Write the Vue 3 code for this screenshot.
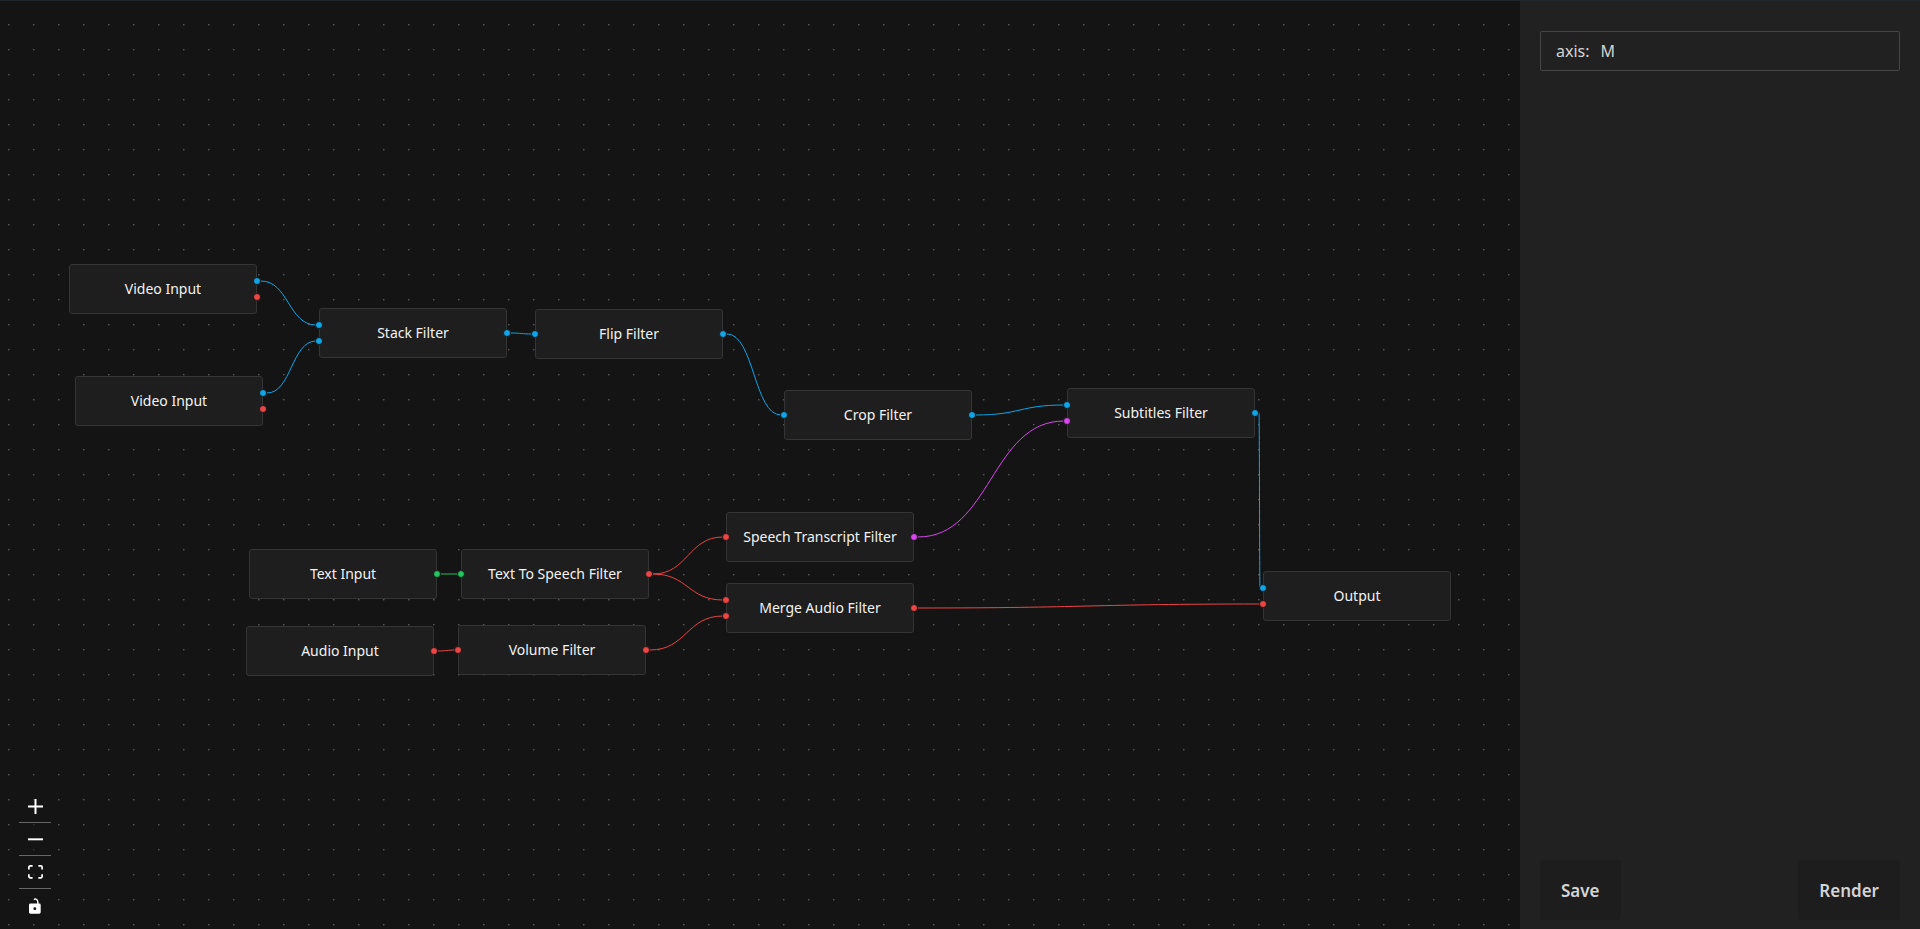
<script setup>
import { ref } from 'vue'

const WIDTH = 188

const nodes = [
  { id: 'video1', title: 'Video Input', x: 69, y: 264, out: ['video', 'audio'] },
  { id: 'video2', title: 'Video Input', x: 75, y: 376, out: ['video', 'audio'] },
  { id: 'stack', title: 'Stack Filter', x: 319, y: 308, in: ['video', 'video'], out: ['video'] },
  { id: 'flip', title: 'Flip Filter', x: 535, y: 309, in: ['video'], out: ['video'] },
  { id: 'crop', title: 'Crop Filter', x: 784, y: 390, in: ['video'], out: ['video'] },
  { id: 'subs', title: 'Subtitles Filter', x: 1067, y: 388, in: ['video', 'subtitle'], out: ['video'] },
  { id: 'text', title: 'Text Input', x: 249, y: 549, out: ['text'] },
  { id: 'tts', title: 'Text To Speech Filter', x: 461, y: 549, in: ['text'], out: ['audio'] },
  { id: 'audio', title: 'Audio Input', x: 246, y: 626, out: ['audio'] },
  { id: 'volume', title: 'Volume Filter', x: 458, y: 625, in: ['audio'], out: ['audio'] },
  { id: 'speech', title: 'Speech Transcript Filter', x: 726, y: 512, in: ['audio'], out: ['subtitle'] },
  { id: 'merge', title: 'Merge Audio Filter', x: 726, y: 583, in: ['audio', 'audio'], out: ['audio'] },
  { id: 'output', title: 'Output', x: 1263, y: 571, in: ['video', 'audio'] },
]

const links = [
  ['video1', 0, 'stack', 0],
  ['video2', 0, 'stack', 1],
  ['stack', 0, 'flip', 0],
  ['flip', 0, 'crop', 0],
  ['crop', 0, 'subs', 0],
  ['speech', 0, 'subs', 1],
  ['subs', 0, 'output', 0],
  ['text', 0, 'tts', 0],
  ['audio', 0, 'volume', 0],
  ['tts', 0, 'speech', 0],
  ['tts', 0, 'merge', 0],
  ['volume', 0, 'merge', 1],
  ['merge', 0, 'output', 1],
]

const byId = Object.fromEntries(nodes.map((n) => [n.id, n]))
const portY = (count, i) => (count === 1 ? 25 : i === 0 ? 17 : 33)

const edges = links.map(([from, i, to, j]) => {
  const a = byId[from]
  const b = byId[to]
  const x1 = a.x + WIDTH + 4
  const y1 = a.y + portY(a.out.length, i)
  const x2 = b.x - 3
  const y2 = b.y + portY(b.in.length, j)
  const mid = (x1 + x2) / 2
  return { kind: a.out[i], d: `M${x1} ${y1} C${mid} ${y1} ${mid} ${y2} ${x2} ${y2}` }
})

const axis = ref('M')
</script>

<template>
  <div class="app">
    <main class="canvas">
      <svg class="layer" aria-hidden="true">
        <defs>
          <pattern id="dots" x="8" y="24" width="25" height="25" patternUnits="userSpaceOnUse">
            <circle cx="0.8" cy="0.8" r="0.8" fill="#666" />
          </pattern>
        </defs>
        <rect width="100%" height="100%" fill="url(#dots)" />
        <path v-for="e in edges" :key="e.d" :d="e.d" class="edge" :class="e.kind" />
      </svg>

      <div v-for="n in nodes" :key="n.id" class="node" :style="{ left: n.x + 'px', top: n.y + 'px' }">
        <div v-if="n.in" class="ports left">
          <span v-for="(p, i) in n.in" :key="i" class="port" :class="p"></span>
        </div>
        {{ n.title }}
        <div v-if="n.out" class="ports right">
          <span v-for="(p, i) in n.out" :key="i" class="port" :class="p"></span>
        </div>
      </div>

      <div class="controls">
        <button type="button" aria-label="Zoom in">
          <svg width="15" height="15" viewBox="0 0 32 32"><path d="M32 18.133H18.133V32h-4.266V18.133H0v-4.266h13.867V0h4.266v13.867H32z" /></svg>
        </button>
        <button type="button" aria-label="Zoom out">
          <svg width="15" height="3" viewBox="0 0 32 5"><path d="M0 0h32v4.2H0z" /></svg>
        </button>
        <button type="button" aria-label="Fit view">
          <svg width="15" height="14" viewBox="0 0 32 30"><path d="M3.692 4.63c0-.53.4-.938.939-.938h5.215V0H4.708C2.13 0 0 2.054 0 4.63v5.216h3.692V4.631zM27.354 0h-5.2v3.692h5.17c.53 0 .984.4.984.939v5.215H32V4.631A4.624 4.624 0 0027.354 0zm.954 24.83c0 .532-.4.94-.939.94h-5.215v3.768h5.215c2.577 0 4.631-2.13 4.631-4.707v-5.139h-3.692v5.139zm-23.677.94c-.531 0-.939-.4-.939-.94v-5.138H0v5.139c0 2.577 2.13 4.707 4.708 4.707h5.138V25.77H4.631z" /></svg>
        </button>
        <button type="button" aria-label="Toggle interactivity">
          <svg width="12" height="16" viewBox="0 0 25 32"><path d="M21.333 10.667H19.81V7.619C19.81 3.429 16.38 0 12.19 0c-4.114 1.828-1.37 2.133.305 2.438 1.676.305 4.42 2.59 4.42 5.181v3.048H3.047A3.056 3.056 0 000 13.714v15.238A3.056 3.056 0 003.048 32h18.285a3.056 3.056 0 003.048-3.048V13.714a3.056 3.056 0 00-3.048-3.047zM12.19 24.533a3.056 3.056 0 01-3.047-3.047 3.056 3.056 0 013.047-3.048 3.056 3.056 0 013.048 3.048 3.056 3.056 0 01-3.048 3.047z" /></svg>
        </button>
      </div>
    </main>

    <aside class="sidebar">
      <div class="field">
        <label for="axis">axis:</label>
        <input id="axis" v-model="axis" type="text" />
      </div>
      <div class="actions">
        <button type="button">Save</button>
        <button type="button">Render</button>
      </div>
    </aside>
  </div>
</template>

<style>
body {
  background: #141414;
}
</style>

<style scoped>
.app {
  display: flex;
  height: 100vh;
  box-sizing: border-box;
  border-top: 1px solid #22272b;
  background: #141414;
  font-family: 'Noto Sans', sans-serif;
  color: #d4d4d4;
}

.canvas {
  position: relative;
  flex: 1;
  min-width: 0;
  margin-top: -1px;
  overflow: hidden;
  clip-path: inset(1px 0 0 0);
}

.layer {
  position: absolute;
  inset: 0;
  width: 100%;
  height: 100%;
}

.edge {
  fill: none;
  stroke: currentColor;
  stroke-width: 1;
}

.video { color: #0ea5e9; }
.audio { color: #ef4444; }
.text { color: #22c55e; }
.subtitle { color: #d946ef; }

.node {
  position: absolute;
  display: flex;
  align-items: center;
  justify-content: center;
  box-sizing: border-box;
  width: 188px;
  height: 50px;
  padding-bottom: 1px;
  border: 1px solid #353535;
  border-radius: 3px;
  background: #1e1e1e;
  color: #f2f2f2;
  font-size: 14px;
  white-space: nowrap;
}

.ports {
  position: absolute;
  top: 0;
  bottom: 0;
  display: flex;
  flex-direction: column;
  justify-content: center;
  gap: 8px;
}

.ports.left { left: -5px; }
.ports.right { right: -5px; }

.port {
  box-sizing: border-box;
  width: 8px;
  height: 8px;
  border: 1px solid #1a1a1a;
  border-radius: 50%;
  background: currentColor;
}

.controls {
  position: absolute;
  left: 19px;
  bottom: 7px;
  display: flex;
  flex-direction: column;
  background: rgba(19, 19, 19, 0.5);
}

.controls button {
  display: flex;
  align-items: center;
  justify-content: center;
  width: 32px;
  height: 33px;
  padding: 0;
  border: 0;
  border-bottom: 1px solid #666;
  background: none;
}

.controls button:last-child {
  border-bottom: 0;
}

.controls path {
  fill: #fff;
}

.sidebar {
  display: flex;
  flex-direction: column;
  justify-content: space-between;
  box-sizing: border-box;
  width: 400px;
  padding: 30px 20px 9px;
  background: #212121;
}

.field {
  display: flex;
  align-items: center;
  gap: 11px;
  box-sizing: border-box;
  height: 40px;
  padding: 0 15px;
  border: 1px solid #464646;
  border-radius: 2px;
  font-size: 16px;
}

.field input {
  flex: 1;
  min-width: 0;
  padding: 0;
  border: 0;
  outline: 0;
  background: none;
  color: inherit;
  font: inherit;
}

.actions {
  display: flex;
  justify-content: space-between;
}

.actions button {
  height: 60px;
  padding: 0 21px;
  border: 0;
  border-radius: 4px;
  background: #1d1d1d;
  color: #d4d4d4;
  font: 600 17px 'Noto Sans', sans-serif;
}
</style>
